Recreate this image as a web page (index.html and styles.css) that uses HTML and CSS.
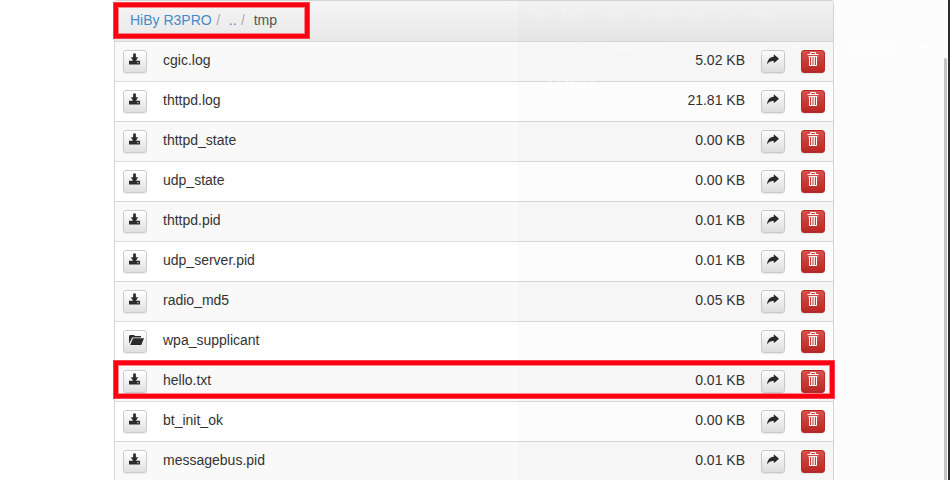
FILE: index.html
```html
<!DOCTYPE html>
<html lang="en">
<head>
<meta charset="utf-8">
<title>HiBy R3PRO</title>
<link rel="stylesheet" href="styles.css">
</head>
<body>
<svg class="defs" aria-hidden="true">
<symbol id="download" viewBox="0 0 12 12"><path d="M4.5 0h3v4H10L7.6 8H12v4H0V8h4.4L2 4h2.5zM9 9.5v1h1.5v-1z"/></symbol>
<symbol id="share" viewBox="0 0 12 12"><path d="M6.8.3 12 4.7 6.8 9.2V7.1C3.8 6.9 2 7.8.1 10.3.4 5.7 3 3 6.8 2.8z"/></symbol>
<symbol id="trash" viewBox="0 0 12 14"><path fill="none" stroke="currentColor" d="M3.5 2.5v-2h5v2M.5 2.5h11M1.5 4.5h9M2.5 5v8.5h7V5"/><path fill="none" stroke="currentColor" stroke-width=".9" d="M4.5 5v8M6 5v8M7.5 5v8"/></symbol>
<symbol id="folder" viewBox="0 0 15 12"><path d="M0 9.8V2l1-1h4l1 1h6v1.5H3.2zM4 4.2h11L12.3 11H1.2z"/></symbol>
</svg>
<main class="panel">
<nav class="breadcrumb"><a>HiBy R3PRO</a><i>/</i><a class="up">..</a><i>/</i><span>tmp</span></nav>
<div id="files"></div>
</main>
<div class="veil">
<span class="ghost file">File</span><span class="ghost edit">Edit</span><span class="ghost view">View</span><span class="ghost menu">Screenshot</span><span class="ghost go">Go</span><span class="ghost help">Help</span>
<svg class="ghost cursor" viewBox="0 0 10 14"><path d="M1 1v11l3-3h5z" fill="none" stroke="currentColor"/></svg>
<span class="ghost selection">Selection</span><span class="ghost desktop">Desktop</span><i class="ghost caret caret-desktop"></i><span class="ghost window">Window</span><i class="ghost caret caret-window"></i><span class="ghost session">Session</span><span class="ghost count">0 screenshots&nbsp; 0</span>
</div>
<div class="mark mark-path"></div>
<div class="mark mark-row"></div>
<div class="scroll"></div><div class="edge"></div>
<script src="files.js"></script>
</body>
</html>
```
FILE: files.js
```js
const files = [
  ['cgic.log', '5.02 KB'], ['thttpd.log', '21.81 KB'], ['thttpd_state', '0.00 KB'],
  ['udp_state', '0.00 KB'], ['thttpd.pid', '0.01 KB'], ['udp_server.pid', '0.01 KB'],
  ['radio_md5', '0.05 KB'], ['wpa_supplicant', ''], ['hello.txt', '0.01 KB'],
  ['bt_init_ok', '0.00 KB'], ['messagebus.pid', '0.01 KB']
];
const button = (icon) => `<button class="btn ${icon}" aria-label="${icon}"><svg><use href="#${icon}"/></svg></button>`;
document.getElementById('files').innerHTML = files.map(([name, size]) =>
  `<div class="row">${button(size ? 'download' : 'folder')}<span class="name">${name}</span><span class="size">${size}</span>${button('share')}${button('trash')}</div>`
).join('');
```
FILE: styles.css
```css
* { box-sizing: border-box; }
html, body { height: 480px; overflow: hidden; }
body { margin: 0; background: #fff; color: #333; font: 14px/20px "Liberation Sans", Arial, sans-serif; position: relative; }
.defs { position: absolute; width: 0; height: 0; }
.panel { width: 720px; margin-left: 114px; border: 1px solid #d6d6d6; border-bottom: 0; border-radius: 4px 4px 0 0; overflow: hidden; }
.breadcrumb { height: 40px; padding: 9px 15px; display: flex; background: linear-gradient(#f5f5f5, #e8e8e8); color: #555; }
.breadcrumb a { color: #428bca; }
.breadcrumb i { font-style: normal; color: #aaa; margin-left: 4.5px; }
.breadcrumb .up, .breadcrumb span { margin-left: 8.7px; }
.row { height: 40px; border-top: 1px solid #d8d8d8; padding: 0 8px; display: flex; }
.row:nth-child(odd) { background: #f9f9f9; }
.name { margin: 8px 0 0 16px; flex: 1; }
.size { margin: 8px 16px 0 0; }
.btn { width: 24px; height: 23px; margin: 8px 0 0; padding: 0; border: 1px solid #ccc; border-radius: 3px; background: linear-gradient(#fff, #e0e0e0); box-shadow: 0 1px 1px rgba(0,0,0,.08); color: #2b2b2b; display: flex; justify-content: center; align-items: flex-start; }
.btn svg { width: 12px; height: 12px; margin-top: 2px; fill: currentColor; }
.btn.download svg { width: 11px; margin-right: 1px; }
.btn.share svg { margin-top: 3px; }
.btn.folder svg { width: 15px; margin-left: 2px; margin-top: 3px; }
.btn.trash { margin-left: 16px; border-color: #b92c28; background: linear-gradient(#d9534f, #bb2824); color: #fff; }
.btn.trash svg { height: 14px; margin-top: 1px; }
.veil { position: absolute; left: 518px; top: 0; right: 0; bottom: 0; background: rgba(0,0,0,.012); }
.ghost { position: absolute; font: 13px/16px "Noto Sans", sans-serif; color: rgba(255,255,255,.25); white-space: nowrap; }
.file { left: 10px; top: 5px; }
.edit { left: 43px; top: 5px; }
.view { left: 78px; top: 5px; }
.menu { left: 118px; top: 5px; }
.go { left: 199px; top: 5px; }
.help { left: 229px; top: 5px; }
.cursor { left: 59px; top: 39px; width: 10px; height: 14px; }
.selection { left: 91px; top: 39px; color: rgba(255,255,255,.45); }
.desktop { left: 199px; top: 39px; color: rgba(255,255,255,.45); }
.window { left: 331px; top: 39px; color: #fff; }
.caret { width: 0; height: 0; border: 5px solid transparent; border-bottom: 0; border-top-color: rgba(255,255,255,.5); }
.caret-desktop { left: 272px; top: 45px; }
.caret-window { left: 401px; top: 45px; border-top-color: #fff; }
.session { left: 30px; top: 75px; font-weight: bold; color: rgba(255,255,255,.5); }
.count { left: 18px; top: 464px; }
.mark { position: absolute; border: 4px solid #ff0013; box-shadow: 0 0 0 1px rgba(255,0,19,.75), inset 0 0 0 1px rgba(255,0,19,.45); }
.mark-path { left: 114px; top: 3px; width: 195px; height: 35px; }
.mark-row { left: 114px; top: 361px; width: 720px; height: 37px; }
.scroll { position: absolute; left: 944px; top: 58px; width: 3px; bottom: 0; background: #c4c4c4; border-radius: 2px 2px 0 0; }
.edge { position: absolute; left: 948px; top: 0; width: 2px; bottom: 0; background: #20313a; }
```
